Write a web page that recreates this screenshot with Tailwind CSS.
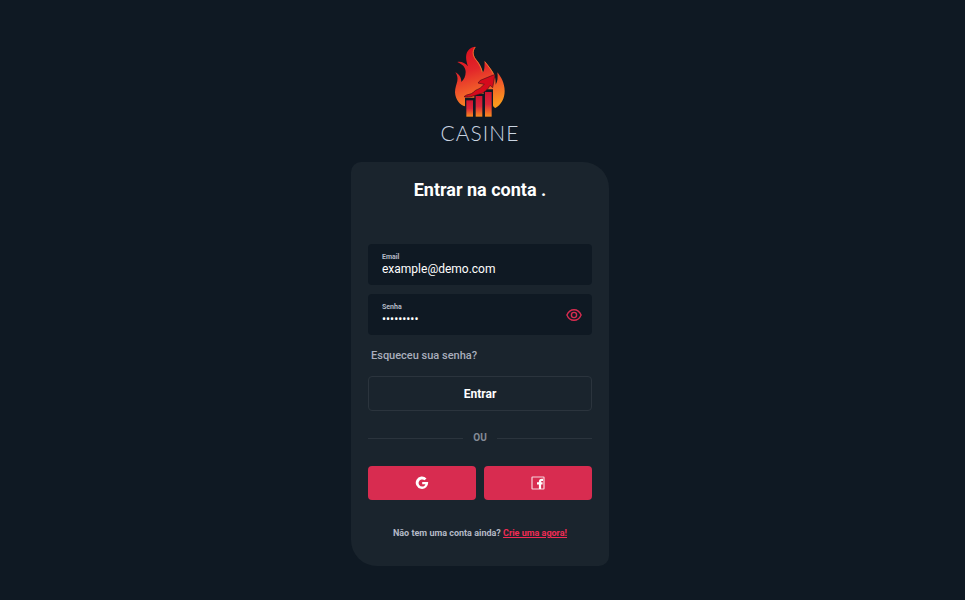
<!DOCTYPE html>
<html lang="pt-BR">
<head>
    <meta charset="UTF-8">
    <meta name="viewport" content="width=device-width, initial-scale=1.0">
    <title>Casine - Entrar</title>
    <script src="https://cdn.jsdelivr.net/npm/@tailwindcss/browser@4"></script>
</head>
<body class="bg-[#0f1923] font-['Roboto',sans-serif] text-white min-h-screen flex flex-col items-center pt-[46px] pb-8 pr-[5px]">

<header class="flex flex-col items-center">
    <svg class="w-[52px] h-[72px]" viewBox="72 18 156 216" aria-hidden="true">
        <defs>
            <linearGradient id="flame" x1="0.35" y1="0" x2="0.6" y2="1">
                <stop offset="0" stop-color="#d9101f"/>
                <stop offset="0.35" stop-color="#e2262a"/>
                <stop offset="0.7" stop-color="#f2602a"/>
                <stop offset="1" stop-color="#fb9a1c"/>
            </linearGradient>
            <linearGradient id="bar" x1="0" y1="0" x2="0" y2="1">
                <stop offset="0" stop-color="#cf1230"/>
                <stop offset="0.5" stop-color="#d9263a"/>
                <stop offset="1" stop-color="#fb8c1e"/>
            </linearGradient>
        </defs>
        <path fill="url(#flame)" d="M137 20C127 34 130 48 140 60C149 71 156 84 158 98C165 90 163 78 164 63C174 76 188 91 194 107C197 117 197 126 197 134C203 125 204 112 202 97C213 110 224 130 224 153C224 176 213 195 196 204C192 203 190 200 189 196V148H161V161H133V173H105V199C91 196 76 180 75 157C75 145 80 132 82 123C84 113 81 104 76 97C88 102 94 114 94 126C102 119 107 109 107 96C107 82 98 73 82 66C94 64 105 69 114 79C108 61 105 44 114 32C120 24 128 20 137 20Z"/>
        <path fill="none" stroke="#f9a030" stroke-width="2" stroke-linecap="round" d="M135 22C125 35 129 50 140 62C148 72 154 84 157 96M165 66C175 79 188 93 193 108"/>
        <path fill="#d50a1c" stroke="#4a0f18" stroke-width="2" stroke-linejoin="round" d="M102 170C112 161 122 165 130 157C139 147 145 149 152 143C157 138 160 136 163 133L144 129L151 121L195 103L188 143L180 136C172 151 162 159 149 162C134 166 120 174 102 170Z"/>
        <g fill="url(#bar)">
            <path d="M109 181H129V230H109Z"/>
            <path d="M137 168H157V230H137Z"/>
            <path d="M165 156H185V230H165Z"/>
        </g>
    </svg>
    <span class="mt-[3px] font-['Lato',sans-serif] font-light text-[21px] leading-6 tracking-wider text-slate-300">CASINE</span>
</header>

<main class="mt-[17px] w-full max-w-[258px] bg-[#1a242d] rounded-tl-[10px] rounded-tr-[26px] rounded-br-[10px] rounded-bl-[26px] px-[17px] pt-4 pb-[25px]">
    <h1 class="text-lg leading-6 font-bold text-center">Entrar na conta .</h1>

    <form class="mt-[42px]">
        <div class="flex flex-col h-[41px] rounded bg-[#0f1923] px-3.5 pt-[9px]">
            <label for="email" class="text-[7px] leading-2 font-bold text-[#b4b9c6]">Email</label>
            <input type="email" id="email" name="email" value="example@demo.com" class="w-full text-xs leading-4 text-white focus:outline-none">
        </div>

        <div class="mt-[9px] flex items-center h-[41px] rounded bg-[#0f1923] pl-3.5 pr-2.5">
            <div class="flex flex-col grow h-full pt-[9px] min-w-0">
                <label for="senha" class="text-[7px] leading-2 font-bold text-[#b4b9c6]">Senha</label>
                <input type="password" id="senha" name="senha" value="demo12345" class="w-full text-xs leading-4 text-white focus:outline-none">
            </div>
            <button type="button" aria-label="Mostrar senha" class="text-[#d82c50]">
                <svg class="w-4 h-4" viewBox="0 0 16 16" fill="none" stroke="currentColor" stroke-width="1.4">
                    <path d="M0.9 8C2.4 4.4 5 2.7 8 2.7S13.6 4.4 15.1 8C13.6 11.6 11 13.3 8 13.3S2.4 11.6 0.9 8Z"/>
                    <circle cx="8" cy="8" r="2.6"/>
                </svg>
            </button>
        </div>

        <a href="#" class="block w-fit mt-[13px] ml-[3px] text-[11px] leading-4 font-medium text-[#a9aebc]">Esqueceu sua senha?</a>

        <button type="submit" class="mt-3 w-full h-[35px] rounded border border-[#2b343d] text-xs font-bold">Entrar</button>
    </form>

    <div class="mt-[19px] flex items-center gap-2.5 text-[10px] leading-4 font-bold text-[#858c97]">
        <span class="grow h-px bg-[#2b343d]"></span>
        OU
        <span class="grow h-px bg-[#2b343d]"></span>
    </div>

    <div class="mt-5 grid grid-cols-2 gap-2">
        <button type="button" aria-label="Google" class="flex items-center justify-center h-[34px] rounded bg-[#d82c50]">
            <svg class="w-3.5 h-3.5" viewBox="0 0 14 14" fill="#fff">
                <path d="M7.2 5.9V8.3H10.4C10 9.8 8.8 10.6 7.2 10.6A3.6 3.6 0 1 1 9.6 4.3L11.5 2.5A6.2 6.2 0 1 0 13.1 5.9Z"/>
            </svg>
        </button>
        <button type="button" aria-label="Facebook" class="flex items-center justify-center h-[34px] rounded bg-[#d82c50]">
            <svg class="w-3.5 h-3.5" viewBox="0 0 14 14" fill="none" stroke="#fff">
                <rect x="1" y="1" width="12" height="12" rx="0.5" stroke-width="1.2" stroke-opacity="0.8"/>
                <path stroke-width="2.2" d="M9 13V5.6Q9 3.8 10.8 3.8H12M6 7.4H11.6"/>
            </svg>
        </button>
    </div>

    <p class="mt-[25px] text-center text-[9px] leading-4 font-bold text-[#b4b9c6]">Não tem uma conta ainda? <a href="#" class="text-[#f02c55] underline">Crie uma agora!</a></p>
</main>

</body>
</html>
